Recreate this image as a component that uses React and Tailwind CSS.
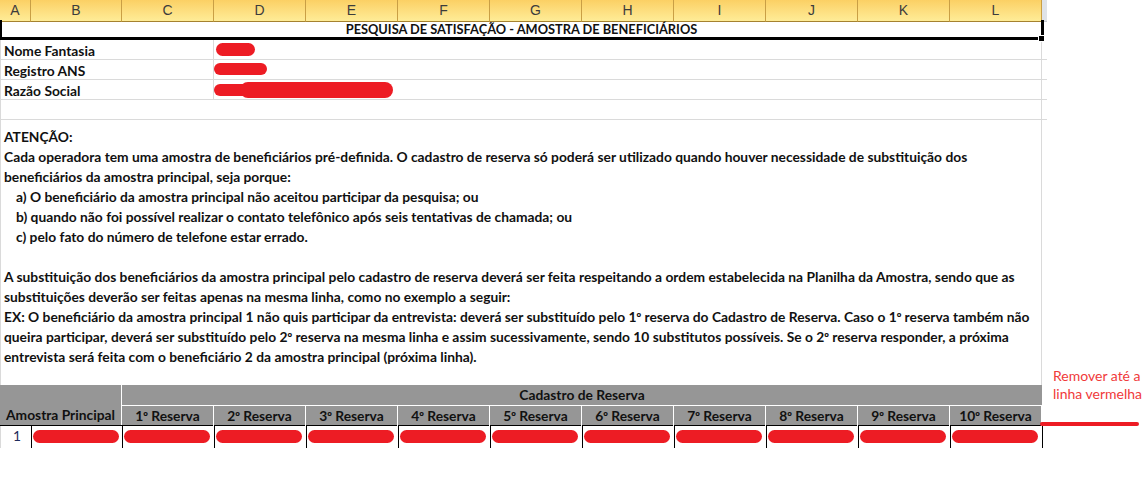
import React from "react";

const letters = ["A", "B", "C", "D", "E", "F", "G", "H", "I", "J", "K", "L"];
const reservas = ["1º Reserva", "2º Reserva", "3º Reserva", "4º Reserva", "5º Reserva", "6º Reserva", "7º Reserva", "8º Reserva", "9º Reserva", "10º Reserva"];

const textLines = [
  { t: "ATENÇÃO:" },
  { t: "Cada operadora tem uma amostra de beneficiários pré-definida. O cadastro de reserva só poderá ser utilizado quando houver necessidade de substituição dos" },
  { t: "beneficiários da amostra principal, seja porque:" },
  { t: "a) O beneficiário da amostra principal não aceitou participar da pesquisa; ou", indent: true },
  { t: "b) quando não foi possível realizar o contato telefônico após seis tentativas de chamada; ou", indent: true },
  { t: "c) pelo fato do número de telefone estar errado.", indent: true },
  { t: "" },
  { t: "A substituição dos beneficiários da amostra principal pelo cadastro de reserva deverá ser feita respeitando a ordem estabelecida na Planilha da Amostra, sendo que as" },
  { t: "substituições deverão ser feitas apenas na mesma linha, como no exemplo a seguir:" },
  { t: "EX: O beneficiário da amostra principal 1 não quis participar da entrevista: deverá ser substituído pelo 1º reserva do Cadastro de Reserva. Caso o 1º reserva também não" },
  { t: "queira participar, deverá ser substituído pelo 2º reserva na mesma linha e assim sucessivamente, sendo 10 substitutos possíveis. Se o 2º reserva responder, a próxima" },
  { t: "entrevista será feita com o beneficiário 2 da amostra principal (próxima linha)." },
];

function Ord({ text }) {
  const parts = text.split("º");
  return (
    <span className="whitespace-pre">
      {parts.map((p, i) => (
        <React.Fragment key={i}>
          {p}
          {i < parts.length - 1 && <span className="font-['Liberation_Sans',sans-serif] text-[12.5px]">º</span>}
        </React.Fragment>
      ))}
    </span>
  );
}

function Blob({ className }) {
  return <div className={"rounded-full bg-[#ed1c24] " + className} />;
}

export default function App() {
  return (
    <div className="relative w-[1146px] h-[480px] bg-white overflow-hidden text-[#111] font-['Lato','Liberation_Sans',sans-serif] text-[13.8px]">
      {/* column headers */}
      <div className="grid grid-cols-[31px_91px_92px_92px_92px_92px_92px_92px_92px_92px_92px_92px_5px] h-[20px]">
        {letters.map((l) => (
          <div
            key={l}
            className="flex items-center justify-center border-r border-b border-r-[#c99f45] border-b-[#a5822f] bg-linear-to-b from-[#fbd064] to-[#feec97] text-[14px] text-[#3c3c3c] font-['Liberation_Sans',sans-serif] font-normal"
          >
            {l}
          </div>
        ))}
        <div className="bg-[#dfe3e8] border-b border-[#c6cbd1]" />
      </div>

      {/* title row */}
      <div className="flex h-[20px]">
        <div className="relative w-[1044px] h-[20px] border-l-2 border-r-[3px] border-b-[3px] border-black flex items-start justify-center pt-[2px] leading-[15px] text-[12.8px] font-bold">
          PESQUISA DE SATISFAÇÃO - AMOSTRA DE BENEFICIÁRIOS
          <div className="absolute right-[-4px] bottom-[-5px] w-[7px] h-[7px] bg-black border border-white" />
        </div>
      </div>

      {/* info rows */}
      {[
        ["Nome Fantasia", <Blob key="b1" className="ml-[2px] mt-[3px] w-[39px] h-[13px]" />],
        ["Registro ANS", <Blob key="b2" className="ml-[0px] mt-[3px] w-[53px] h-[12px]" />],
        [
          "Razão Social",
          <div key="b3" className="flex items-center mt-[2px]">
            <Blob className="w-[40px] h-[12px]" />
            <Blob className="-ml-[14px] w-[153px] h-[16px]" />
          </div>,
        ],
      ].map(([label, blob]) => (
        <div key={label} className="flex h-[20px]">
          <div className="w-[214px] border-l border-b border-r border-[#dadada] pl-[3px] pt-[1px] font-bold leading-[19px]">{label}</div>
          <div className="w-[828px] border-b border-r border-[#dadada]">{blob}</div>
          <div className="w-[5px] border-b border-[#dadada]" />
        </div>
      ))}
      <div className="flex h-[20px]">
        <div className="w-[1042px] border-l border-b border-r border-[#dadada]" />
        <div className="w-[5px] border-b border-[#dadada]" />
      </div>

      {/* merged text block */}
      <div className="w-[1042px] h-[265px] border-l border-r border-[#dadada] pl-[3px] pt-[7px] font-bold">
        {textLines.map((l, i) => (
          <div key={i} className={"h-[20px] leading-[20px] whitespace-nowrap " + (l.indent ? "pl-[12px]" : "")}>
            <Ord text={l.t} />
          </div>
        ))}
      </div>

      {/* table header */}
      <div className="flex w-[1042px] h-[41px] border-b border-black bg-[#969696] font-bold">
        <div className="w-[122px] border-r border-white flex items-end justify-center pb-[1px] leading-[19px]">
          Amostra Principal
        </div>
        <div className="w-[920px] flex flex-col">
          <div className="h-[21px] border-b border-white flex items-center justify-center">Cadastro de Reserva</div>
          <div className="grid grid-cols-[92px_92px_92px_92px_92px_92px_92px_92px_92px_92px] h-[19px]">
            {reservas.map((r) => (
              <div key={r} className="border-r border-white flex items-center justify-center leading-[19px]">
                <Ord text={r} />
              </div>
            ))}
          </div>
        </div>
      </div>

      {/* data row */}
      <div className="grid grid-cols-[31px_91px_92px_92px_92px_92px_92px_92px_92px_92px_92px_92px] w-[1042px] h-[22px] border-l border-[#dadada]">
        <div className="border-r border-black pl-[12px] leading-[20px] text-[#1f2c5c]">1</div>
        {Array.from({ length: 11 }).map((_, i) => (
          <div key={i} className="border-r border-black pt-[4px] pl-[1px]">
            <Blob className="w-[86px] h-[13px]" />
          </div>
        ))}
      </div>

      {/* annotation */}
      <div className="absolute left-[1053px] top-[367px] text-[#f03a3a] text-[14px] leading-[18px] font-normal">
        <div>Remover até a</div>
        <div>linha vermelha</div>
      </div>
      <div className="absolute left-[1040px] top-[422px] w-[99px] h-[4px] rounded-full bg-[#ed1c24]" />
    </div>
  );
}
